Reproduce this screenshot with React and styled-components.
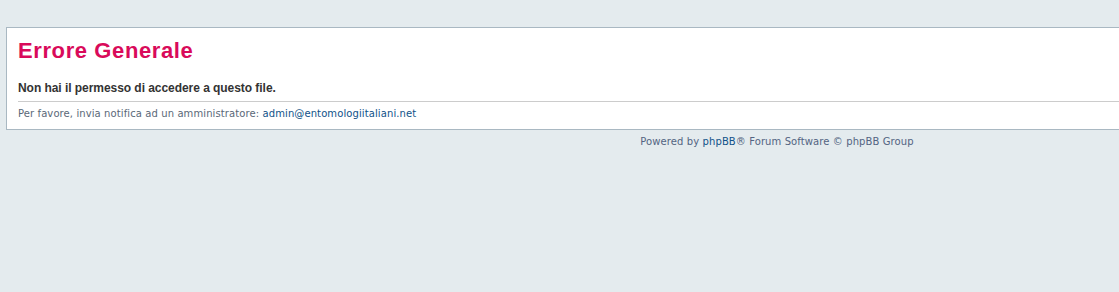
import styled, { createGlobalStyle } from 'styled-components';

const GlobalStyle = createGlobalStyle`
  html, body {
    margin: 0;
    padding: 0;
    background: #e4ebee;
    overflow: hidden;
  }
  body {
    font-family: "Liberation Sans", Arial, sans-serif;
  }
`;

const Page = styled.div`
  width: 1542px;
  padding: 27px 0 0 6px;
`;

const Panel = styled.div`
  background: #ffffff;
  border: 1px solid #a9b8c2;
  padding: 0 0 0 11px;
`;

const Title = styled.h2`
  margin: 0;
  padding: 10px 0 0 0;
  height: 32px;
  font-family: "Liberation Sans", Arial, sans-serif;
  font-weight: bold;
  font-size: 22px;
  letter-spacing: 0.6px;
  color: #d90a5a;
`;

const Message = styled.p`
  margin: 0;
  padding: 11px 0 0 0;
  height: 16px;
  font-size: 12px;
  font-weight: bold;
  letter-spacing: -0.05px;
  color: #333333;
`;

const Notice = styled.p`
  margin: 4px 0 0 0;
  padding: 6px 0 0 0;
  height: 21px;
  border-top: 1px solid #cccccc;
  font-family: "DejaVu Sans", Verdana, sans-serif;
  font-size: 10px;
  letter-spacing: 0.1px;
  color: #5a6878;
`;

const Link = styled.a`
  color: #105289;
  text-decoration: none;
`;

const Footer = styled.div`
  text-align: center;
  padding-top: 6px;
  font-family: "DejaVu Sans", Verdana, sans-serif;
  font-size: 10px;
  letter-spacing: 0.1px;
  color: #536482;
`;

export default function App() {
  return (
    <>
      <GlobalStyle />
      <Page>
        <Panel>
          <Title>Errore Generale</Title>
          <Message>Non hai il permesso di accedere a questo file.</Message>
          <Notice>
            Per favore, invia notifica ad un amministratore:{' '}
            <Link href="#">admin@entomologiitaliani.net</Link>
          </Notice>
        </Panel>
        <Footer>
          Powered by <Link href="#">phpBB</Link>® Forum Software © phpBB Group
        </Footer>
      </Page>
    </>
  );
}
